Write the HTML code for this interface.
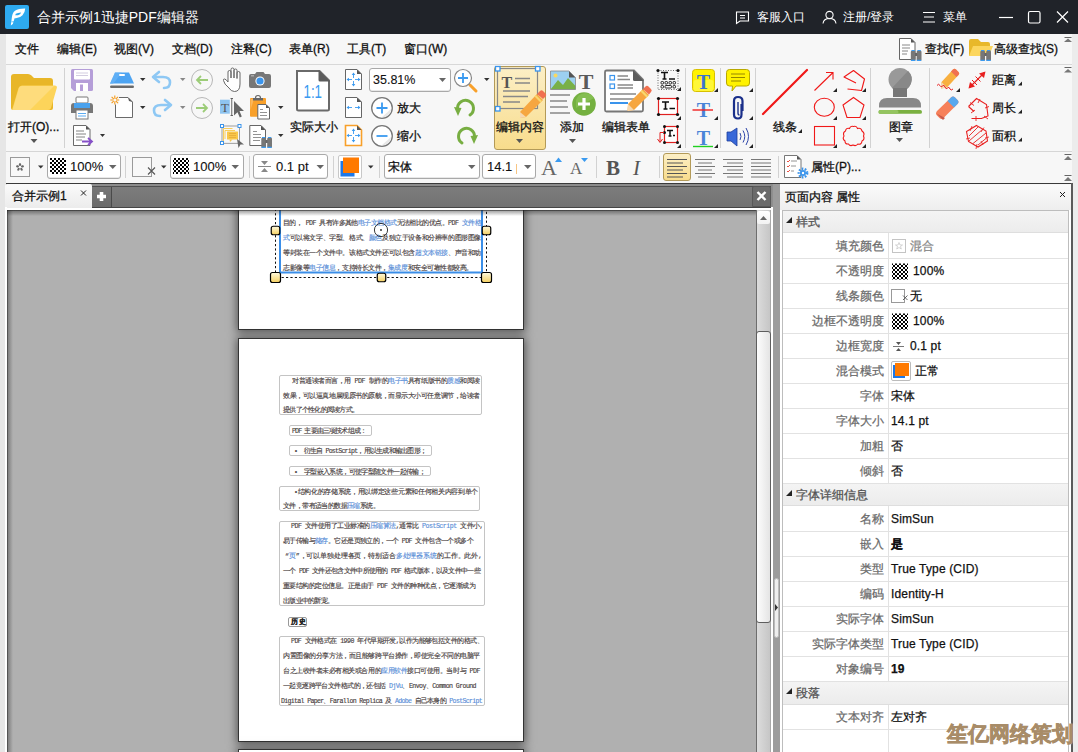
<!DOCTYPE html>
<html><head><meta charset="utf-8">
<style>
*{margin:0;padding:0;box-sizing:border-box}
html,body{width:1078px;height:752px;overflow:hidden;background:#f7f7f7;font-family:"Liberation Sans",sans-serif;font-size:12px;color:#111}
.a{position:absolute}
.t{position:absolute;white-space:nowrap;line-height:14px;-webkit-text-stroke:0.3px currentColor}
svg{position:absolute;overflow:visible}
#title{left:0;top:0;width:1078px;height:34px;background:#202329;color:#fff}
#menu{left:6px;top:34px;width:1066px;height:31px;background:#f7f7f7;border-bottom:1px solid #d8d8d8}
#leftstrip{left:0;top:34px;width:6px;height:718px;background:#e6e6e6}
#rightstrip{left:1072px;top:34px;width:6px;height:718px;background:#ececec}
#ribbon{left:6px;top:65px;width:1066px;height:87px;background:#f7f7f7;border-bottom:1px solid #d6d6d6}
#fmt{left:6px;top:152px;width:1066px;height:31px;background:#f7f7f7}
#darkline{left:6px;top:183px;width:1066px;height:1px;background:#3a3a3a}
.sep{position:absolute;width:1px;background:#d4d4d4}
.dd{position:absolute;background:#fff;border:1px solid #a9a9a9;border-radius:3px;box-shadow:inset 0 -1px 0 #e8e8e8}
.arr{position:absolute;width:0;height:0;border-left:3.5px solid transparent;border-right:3.5px solid transparent;border-top:4px solid #555}
.arrg{border-top-color:#777}
.corner{position:absolute;width:0;height:0;border-left:5px solid transparent;border-bottom:5px solid #222}
.pl{position:absolute;margin-top:1px;white-space:nowrap;font-family:"Liberation Mono",monospace;font-size:6.6px;line-height:10px;color:#4a4242;-webkit-text-stroke:0.15px currentColor;overflow:visible}
.bl{color:#5b8fd8}
.pb{position:absolute;border:1px solid #c4c4c4;border-radius:2px}
</style></head><body>
<div id="title" class="a">
  <div class="a" style="left:5px;top:5px;width:24px;height:24px;background:#2eaaf0;border-radius:2px"></div>
  <div class="t" style="left:37px;top:9px;font-size:14px;line-height:16px;color:#fff;-webkit-text-stroke:0">合并示例1迅捷PDF编辑器</div>
  <div class="t" style="left:757px;top:10px;font-size:12px;color:#fff;-webkit-text-stroke:0">客服入口</div>
  <div class="t" style="left:843px;top:10px;font-size:12px;color:#fff;-webkit-text-stroke:0">注册/登录</div>
  <div class="t" style="left:943px;top:10px;font-size:12px;color:#fff;-webkit-text-stroke:0">菜单</div>
</div>
<div id="leftstrip" class="a"></div>
<div id="rightstrip" class="a"></div>
<div id="menu" class="a">
  <div class="t" style="left:9px;top:8px">文件</div>
  <div class="t" style="left:51px;top:8px">编辑(E)</div>
  <div class="t" style="left:108px;top:8px">视图(V)</div>
  <div class="t" style="left:166px;top:8px">文档(D)</div>
  <div class="t" style="left:225px;top:8px">注释(C)</div>
  <div class="t" style="left:283px;top:8px">表单(R)</div>
  <div class="t" style="left:341px;top:8px">工具(T)</div>
  <div class="t" style="left:398px;top:8px">窗口(W)</div>
  <div class="t" style="left:919px;top:8px">查找(F)</div>
  <div class="t" style="left:988px;top:8px">高级查找(S)</div>
</div>
<div id="ribbon" class="a"></div>
<div class="t" style="left:8px;top:120px">打开(O)...</div>
<div class="t" style="left:290px;top:120px">实际大小</div>
<div class="dd" style="left:369px;top:68px;width:82px;height:24px"></div>
<div class="t" style="left:373px;top:73px;-webkit-text-stroke:0.1px;font-size:12.5px">35.81%</div>
<div class="t" style="left:397px;top:101px">放大</div>
<div class="t" style="left:397px;top:129px">缩小</div>
<div class="a" style="left:494px;top:66px;width:52px;height:84px;border:1px solid #b39a58;border-radius:3px;background:linear-gradient(#fcefc6,#f8dc8c)"></div>
<div class="t" style="left:496px;top:120px">编辑内容</div>
<div class="t" style="left:560px;top:120px">添加</div>
<div class="t" style="left:602px;top:120px">编辑表单</div>
<div class="t" style="left:773px;top:120px">线条</div>
<div class="t" style="left:889px;top:120px">图章</div>
<div class="t" style="left:992px;top:73px">距离</div>
<div class="t" style="left:992px;top:101px">周长</div>
<div class="t" style="left:992px;top:129px">面积</div>

<div id="fmt" class="a"></div>
<div class="a" style="left:10px;top:157px;width:20px;height:20px;border:1px solid #9a9a9a;background:#f8f8f8"></div>
<div class="dd" style="left:47px;top:154px;width:74px;height:25px"></div>
<div class="t" style="left:70px;top:160px;-webkit-text-stroke:0.1px;font-size:13px">100%</div>
<div class="a" style="left:132px;top:157px;width:20px;height:20px;border:1px solid #9a9a9a;background:#f8f8f8"></div>
<div class="dd" style="left:170px;top:154px;width:74px;height:25px"></div>
<div class="t" style="left:193px;top:160px;-webkit-text-stroke:0.1px;font-size:13px">100%</div>
<div class="dd" style="left:253px;top:154px;width:75px;height:25px"></div>
<div class="t" style="left:276px;top:160px;-webkit-text-stroke:0.1px;font-size:13px">0.1 pt</div>
<div class="a" style="left:338px;top:155px;width:24px;height:24px;border:1px solid #c8c8c8;border-radius:2px;background:#fff"></div>
<div class="dd" style="left:384px;top:154px;width:96px;height:25px"></div>
<div class="t" style="left:388px;top:160px">宋体</div>
<div class="dd" style="left:482px;top:154px;width:54px;height:25px"></div>
<div class="a" style="left:486px;top:156px;width:31px;height:20px;overflow:hidden"><div class="t" style="left:1px;top:4px;-webkit-text-stroke:0.1px;font-size:13px">14.1 p</div></div>
<div class="a" style="left:663px;top:153px;width:28px;height:28px;border:1px solid #b39a58;border-radius:3px;background:linear-gradient(#fcefc6,#f8dc8c)"></div>
<div class="t" style="left:811px;top:160px">属性(P)...</div>

<div id="darkline" class="a"></div>
<!--ICONS1--><svg class="a" style="left:0;top:0" width="1078" height="752" viewBox="0 0 1078 752">
<defs>
<pattern id="chk" width="4" height="4" patternUnits="userSpaceOnUse"><rect width="4" height="4" fill="#fff"/><rect width="2" height="2" fill="#000"/><rect x="2" y="2" width="2" height="2" fill="#000"/></pattern>
<linearGradient id="hdl" x1="0" y1="0" x2="0" y2="1"><stop offset="0" stop-color="#fff6cf"/><stop offset="1" stop-color="#f7d66a"/></linearGradient>
</defs>
<!-- title bar icons -->
<path d="M10.8,25.5 L11.6,19.5 Q12,13 15,10.8 Q18.5,8.3 25.2,8.4 Q25,12.5 22.5,15.3 Q20,18.2 15.8,18.2 L14.6,18.2 L12.8,24 Z" fill="#fff"/>
<path d="M15.8,13.8 Q17.8,12.6 21.2,12.4 Q20.4,14.6 18,15.2 L15.2,15.3 Z" fill="#2aa6ee"/>
<path d="M11.5,21.8 H14" stroke="#2aa6ee" stroke-width="0.7"/>
<path d="M736.5,12 H748.5 V21 H740 L736.5,23.5 Z" fill="none" stroke="#fff" stroke-width="1.1"/>
<path d="M740,15.5 H745 M740,18 H745" stroke="#fff" stroke-width="1"/>
<circle cx="829.5" cy="15" r="3.6" fill="none" stroke="#fff" stroke-width="1.1"/>
<path d="M823,23.5 C823.5,19.5 826,18.5 829.5,18.5 C833,18.5 835.5,19.5 836,23.5" fill="none" stroke="#fff" stroke-width="1.1"/>
<path d="M923,12.5 H935 M924,17 H934 M923,22 H935" stroke="#fff" stroke-width="1.2"/>
<path d="M999,17.5 H1013" stroke="#fff" stroke-width="1.2"/>
<rect x="1028.5" y="11.5" width="11.5" height="11.5" rx="1.5" fill="none" stroke="#fff" stroke-width="1.2"/>
<path d="M1057,11.5 L1068,22.5 M1068,11.5 L1057,22.5" stroke="#fff" stroke-width="1.2"/>
<!-- menu right icons: find -->
<path d="M899.5,38.5 H911 L915,42.5 V59.5 H899.5 Z" fill="#fff" stroke="#666" stroke-width="1"/>
<path d="M911,38.5 V42.5 H915" fill="#555"/>
<path d="M902,45 H910 M902,48 H910 M902,51 H908 M902,54 H907" stroke="#888" stroke-width="1"/>
<path d="M910.8,52 Q910.8,50.5 912.0,50.5 H914.5 Q915.5,50.5 915.5,52 V60.5 H910.8Z" fill="#777"/><path d="M916.7,52 Q916.7,50.5 917.9,50.5 H920.4 Q921.5,50.5 921.5,52 V60.5 H916.7Z" fill="#777"/><rect x="915.0" y="53" width="2.2" height="3" fill="#666"/><path d="M911.0,59.8 h4.3 v1.2 h-4.3 Z M916.9,59.8 h4.3 v1.2 h-4.3Z M911.5,50 h3.3 v1 h-3.3Z M917.5,50 h3.3 v1 h-3.3Z" fill="#3a9af0"/>
<path d="M969,41 Q969,39 971,39 H978 L981,42 H988 Q990,42 990,44 V56 H969 Z" fill="#e8b82a"/>
<path d="M969,56 L973,46 H993 L989,56 Z" fill="#fcd65e"/>
<path d="M980.3,52 Q980.3,50.5 981.5,50.5 H984 Q985,50.5 985,52 V60.5 H980.3Z" fill="#777"/><path d="M986.2,52 Q986.2,50.5 987.4,50.5 H989.9 Q991,50.5 991,52 V60.5 H986.2Z" fill="#777"/><rect x="984.5" y="53" width="2.2" height="3" fill="#666"/><path d="M980.5,59.8 h4.3 v1.2 h-4.3 Z M986.4,59.8 h4.3 v1.2 h-4.3Z M981,50 h3.3 v1 h-3.3Z M987,50 h3.3 v1 h-3.3Z" fill="#3a9af0"/>
<path d="M1064.5,37.5 H1071.5" stroke="#666" stroke-width="1"/>
<path d="M1064,42 L1068,38.5 L1072,42 Z" fill="#777"/>

<!-- ===== RIBBON ===== -->
<!-- open folder -->
<path d="M11,108 V77 Q11,74 14,74 H28 Q30,74 31.5,75.5 L34,78 H50 Q53,78 53,81 V108 Q53,110 51,110 H13 Q11,110 11,108 Z" fill="#e8b628"/>
<path d="M12,110 L18.5,88 Q19.2,85.5 22,85.5 H54.5 Q57.5,85.5 56.8,88 L51,108 Q50.3,110 48,110 Z" fill="#fdd45a"/>
<path d="M12.5,110 L18.5,89.5 Q19.2,86 22,86 H54 L30,110 Z" fill="#fee08a" opacity="0.7"/>
<path d="M30.5,139 H37.5 L34,143 Z" fill="#555"/>
<line x1="64.5" y1="68" x2="64.5" y2="148" stroke="#d2d2d2"/>
<!-- save -->
<path d="M71,70.5 Q71,69 72.5,69 H91.5 Q93,69 93,70.5 V89.5 Q93,91 91.5,91 H74 L71,88 Z" fill="#b59ed8"/>
<rect x="74" y="70" width="16" height="9.5" rx="1" fill="#fff"/>
<path d="M76,73 H88 M76,75.5 H88" stroke="#c8c0d8" stroke-width="0.8"/>
<rect x="76" y="83" width="12" height="8" fill="#fff"/>
<rect x="80" y="84.5" width="3" height="6.5" fill="#b59ed8"/>
<!-- printer -->
<rect x="76" y="97" width="12" height="6" rx="1" fill="#fff" stroke="#777" stroke-width="1"/>
<path d="M71,106 Q71,103 74,103 H90 Q93,103 93,106 V113 H71 Z" fill="#777"/>
<rect x="74" y="103" width="16" height="5" fill="#4aa2ee"/>
<rect x="76" y="110" width="12" height="9" fill="#fff" stroke="#777" stroke-width="1"/>
<path d="M78,113.5 H86 M78,116 H86" stroke="#4aa2ee" stroke-width="0.9"/>
<!-- export doc -->
<path d="M73.5,125.5 H86 L90,129.5 V145.5 H73.5 Z" fill="#fff" stroke="#6a6a6a" stroke-width="1"/>
<path d="M86,125.5 L90,129.5 H86 Z" fill="#555"/>
<path d="M76,131 H84 M76,134 H86 M76,137 H85 M76,140 H82" stroke="#777" stroke-width="0.9"/>
<path d="M82,141.5 H91 M88,138 L92,141.5 L88,145" fill="none" stroke="#8650c8" stroke-width="1.8"/>
<path d="M100,134 H105 L102.5,137 Z" fill="#333"/>
<!-- scanner -->
<path d="M110,83.5 L115,72.5 H129 L134,83.5 Z" fill="#4da4f2"/>
<path d="M110,84 L115,72.5 H122 L113,84 Z" fill="#6db8f8" opacity="0.6"/>
<rect x="119" y="74" width="6" height="2" rx="1" fill="#fff"/>
<rect x="110" y="85.5" width="24" height="2.5" rx="1.2" fill="#6a6a6a"/>
<path d="M140,78 H145.5 L142.75,81 Z" fill="#333"/>
<!-- new doc -->
<path d="M115.5,97.5 H128 L132.5,102 V117.5 H115.5 Z" fill="#fff" stroke="#6a6a6a" stroke-width="1"/>
<path d="M128,97.5 L132.5,102 L129,101 Z" fill="#555"/>
<rect x="110" y="95" width="9" height="9.5" fill="#f7f7f7"/>
<path d="M114.8,95.5 V104.5 M110.3,100 H119.3 M111.6,96.8 L118,103.2 M118,96.8 L111.6,103.2" stroke="#f59a1a" stroke-width="1.1"/>
<circle cx="114.8" cy="100" r="1.5" fill="#f7f7f7"/>
<path d="M140,106 H145.5 L142.75,109 Z" fill="#333"/>
<!-- undo / redo -->
<path d="M155,77 H163 Q170,77 170,82.5 Q170,88 164,88" fill="none" stroke="#8ec8f4" stroke-width="2.6" stroke-linecap="round"/>
<path d="M159,72 L153,77 L159,82" fill="none" stroke="#8ec8f4" stroke-width="2.6" stroke-linecap="round" stroke-linejoin="round"/>
<path d="M180,78 H185.5 L182.75,81 Z" fill="#888"/>
<path d="M169,105 H161 Q154,105 154,110.5 Q154,116 160,116" fill="none" stroke="#8ec8f4" stroke-width="2.6" stroke-linecap="round"/>
<path d="M165,100 L171,105 L165,110" fill="none" stroke="#8ec8f4" stroke-width="2.6" stroke-linecap="round" stroke-linejoin="round"/>
<path d="M180,106 H185.5 L182.75,109 Z" fill="#888"/>
<!-- back/forward circles -->
<circle cx="202" cy="80" r="10.5" fill="none" stroke="#b8b8b8" stroke-width="1"/>
<path d="M208,80 H197 M201,76 L197,80 L201,84" fill="none" stroke="#9ccc78" stroke-width="1.8"/>
<circle cx="202" cy="108" r="10.5" fill="none" stroke="#b8b8b8" stroke-width="1"/>
<path d="M196,108 H207 M203,104 L207,108 L203,112" fill="none" stroke="#9ccc78" stroke-width="1.8"/>
<!-- hand -->
<path d="M229,88 Q224,84 223.5,80.5 Q223,79 224.5,79 Q226,79 228,82 V72 Q228,70.5 229.5,70.5 Q231,70.5 231,72 V78 V69.5 Q231,68 232.5,68 Q234,68 234,69.5 V78 V70.5 Q234,69 235.5,69 Q237,69 237,70.5 V78.5 V73 Q237,71.5 238.5,71.5 Q240,71.5 240,73 V84 Q240,91.5 234.5,91.5 Q231,91.5 229,88 Z" fill="#fff" stroke="#666" stroke-width="1"/>
<!-- camera -->
<path d="M249,76 Q249,74 251,74 H255 L256.5,72 H263.5 L265,74 H269 Q271,74 271,76 V86 Q271,88 269,88 H251 Q249,88 249,86 Z" fill="#777"/>
<circle cx="260" cy="81" r="4.6" fill="#fff"/>
<circle cx="260" cy="81" r="3.6" fill="#3a94ec"/>
<rect x="251" y="75" width="3" height="1.5" fill="#aaa"/>
<!-- text select -->
<rect x="220" y="99.7" width="9.8" height="14" fill="#8ec4f0"/>
<text x="225" y="112" font-family="Liberation Serif" font-size="13" fill="#555" text-anchor="middle">T</text>
<path d="M230.5,98.5 H233 M231.75,98.5 V115.5 M230.5,115.5 H233" stroke="#555" stroke-width="0.9"/>
<path d="M234,101 L244,111 H239.5 L241.8,116.5 L239.8,117.6 L237.5,112.2 L234,115.5 Z" fill="#666"/>
<!-- clipboard -->
<rect x="250" y="98" width="16" height="18.8" rx="1" fill="#f8a02a"/>
<path d="M250.5,99 H254 L250.5,110 Z" fill="#fcc070" opacity="0.7"/>
<path d="M253,98 H263 V100.5 H253 Z" fill="#666"/>
<path d="M255.5,98 Q255.5,95.5 258,95.5 Q260.5,95.5 260.5,98" fill="none" stroke="#666" stroke-width="1.2"/>
<path d="M257.8,104.5 H266 L269.5,108 V119 H257.8 Z" fill="#fff" stroke="#666" stroke-width="1"/>
<path d="M266,104.5 L269.5,108 H266 Z" fill="#555"/>
<path d="M260,109.5 H263 M260,112.5 H267 M260,115.5 H267" stroke="#777" stroke-width="0.8"/>
<path d="M278,106 H283.5 L280.75,109 Z" fill="#333"/>
<!-- comment select -->
<rect x="222" y="126" width="17.5" height="17.3" fill="none" stroke="#888" stroke-width="0.8"/>
<path d="M223.5,141 V128.5 H232.5" fill="none" stroke="#f8c848" stroke-width="0.9"/>
<path d="M225,139 V130.5 H235" fill="none" stroke="#f8c848" stroke-width="0.9"/>
<rect x="227" y="131.5" width="11" height="8" rx="0.5" fill="#f9c84a"/>
<path d="M229,133.5 H236 M229,135.5 H236 M229,137.5 H236" stroke="#e0a030" stroke-width="0.6"/>
<path d="M229.5,139.5 L230,142 L232.5,139.5Z" fill="#f9c84a"/>
<g fill="#fff" stroke="#3a94ec" stroke-width="1"><rect x="220.5" y="124.5" width="3" height="3"/><rect x="238" y="124.5" width="3" height="3"/><rect x="220.5" y="141.5" width="3" height="3"/></g>
<path d="M237,139 L244,144.5 H240.5 L238.5,148 Z" fill="#666"/>
<!-- doc binoculars -->
<path d="M249.8,125.5 H261 L265.5,130 V145.5 H249.8 Z" fill="#fff" stroke="#666" stroke-width="1"/>
<path d="M261,125.5 L265.5,130 H261 Z" fill="#555"/>
<path d="M253,131.5 H257 M253,134.5 H261 M253,137.5 H261 M253,140.5 H260" stroke="#777" stroke-width="0.8"/>
<path d="M261.3,139 Q261.3,137.5 262.5,137.5 H265 Q266,137.5 266,139 V147.5 H261.3Z" fill="#777"/>
<path d="M267.2,139 Q267.2,137.5 268.4,137.5 H270.9 Q272,137.5 272,139 V147.5 H267.2Z" fill="#777"/>
<rect x="265.5" y="140" width="2.2" height="3" fill="#666"/>
<path d="M261.5,146.8 h4.3 v1.2 h-4.3 Z M267.4,146.8 h4.3 v1.2 h-4.3Z M262,137 h3.3 v1 h-3.3Z M268,137 h3.3 v1 h-3.3Z" fill="#3a9af0"/>
<path d="M278,134 H283.5 L280.75,137 Z" fill="#333"/>
<!-- 1:1 -->
<path d="M297,71 H319.5 L329,80.5 V109 Q329,110.5 327.5,110.5 H298.5 Q297,110.5 297,109 Z" fill="#fff" stroke="#6a6a6a" stroke-width="2"/>
<path d="M318.5,70 L330,81.5 H320 Q318.5,81.5 318.5,80 Z" fill="#5c5c5c"/>
<text x="303.5" y="98" font-size="19" font-family="Liberation Sans" fill="#3a9af0" textLength="18.5" lengthAdjust="spacingAndGlyphs">1:1</text>
<!-- small docs -->
<g stroke="#666" stroke-width="1" fill="#fff">
<path d="M345.5,69.5 H357 L361.5,74 V89.5 H345.5 Z"/>
<path d="M345.5,97.5 H357 L361.5,102 V117.5 H345.5 Z"/>
</g>
<path d="M345.5,125.5 H357 L361.5,130 V145.5 H345.5 Z" fill="#fff" stroke="#f8a02a" stroke-width="1.6"/>
<path d="M357,69.5 L361.5,74 H357Z M357,97.5 L361.5,102 H357Z M357,125.5 L361.5,130 H357Z" fill="#555"/>
<g stroke="#3a9af0" fill="#3a9af0"><path d="M353.5,74.5 V78.0 M353.5,81.0 V84.5 M348.5,79.5 H352.0 M355.0,79.5 H358.5 " fill="none" stroke-width="0.9"/><path d="M351.7,75.0 L353.5,72.5 L355.3,75.0Z M351.7,84.0 L353.5,86.5 L355.3,84.0Z M349.0,77.7 L346.5,79.5 L349.0,81.3Z M358.0,77.7 L360.5,79.5 L358.0,81.3Z " stroke="none"/><path d="M348.5,107.5 H352.0 M355.0,107.5 H358.5 " fill="none" stroke-width="0.9"/><path d="M349.0,105.7 L346.5,107.5 L349.0,109.3Z M358.0,105.7 L360.5,107.5 L358.0,109.3Z " stroke="none"/><path d="M353.5,130.5 V134.0 M353.5,137.0 V140.5 M348.5,135.5 H352.0 M355.0,135.5 H358.5 " fill="none" stroke-width="0.9"/><path d="M351.7,131.0 L353.5,128.5 L355.3,131.0Z M351.7,140.0 L353.5,142.5 L355.3,140.0Z M349.0,133.7 L346.5,135.5 L349.0,137.3Z M358.0,133.7 L360.5,135.5 L358.0,137.3Z " stroke="none"/></g>
<!-- zoom dropdown arrow -->
<path d="M439,78 H446 L442.5,82 Z" fill="#666"/>
<!-- magnifier -->
<path d="M470,85 L476,91" stroke="#f8a02a" stroke-width="3" stroke-linecap="round"/>
<circle cx="463" cy="78" r="8.5" fill="#fff" stroke="#888" stroke-width="1.2"/>
<path d="M458,78 H468 M463,73 V83" stroke="#3a9af0" stroke-width="1.8"/>
<path d="M484,78 H489.5 L486.75,81 Z" fill="#333"/>
<!-- zoom in/out circles -->
<circle cx="382" cy="108" r="10.3" fill="#fff" stroke="#777" stroke-width="1.3"/>
<path d="M385,117 A9,9 0 0 0 391,109 L382,117Z" fill="#e8e8e8"/>
<path d="M376.5,108 H387.5 M382,102.5 V113.5" stroke="#3a9af0" stroke-width="1.8"/>
<circle cx="382" cy="136" r="10.3" fill="#fff" stroke="#777" stroke-width="1.3"/>
<path d="M385,145 A9,9 0 0 0 391,137 L382,145Z" fill="#e8e8e8"/>
<path d="M376.5,136 H387.5" stroke="#3a9af0" stroke-width="1.8"/>
<!-- rotate -->
<path d="M457.5,109 A8,8 0 1 1 470,115" fill="none" stroke="#78ae42" stroke-width="3" stroke-linecap="round"/>
<path d="M454,107 L461.5,108 L458,116 Z" fill="#78ae42"/>
<path d="M474.5,137 A8,8 0 1 0 462,143" fill="none" stroke="#78ae42" stroke-width="3" stroke-linecap="round"/>
<path d="M478,135 L470.5,136 L474,144 Z" fill="#78ae42"/>
</svg>
<!--/ICONS1-->
<!--ICONS2--><svg class="a" style="left:0;top:0" width="1078" height="752" viewBox="0 0 1078 752">
<!-- edit content icon -->
<rect x="497.5" y="68.5" width="40" height="40" fill="none" stroke="#888" stroke-width="1.2"/>
<g fill="#fff" stroke="#3a94ec" stroke-width="1.3">
<rect x="495.5" y="66.5" width="4.5" height="4.5"/><rect x="535.5" y="66.5" width="4.5" height="4.5"/><rect x="495.5" y="106.5" width="4.5" height="4.5"/>
</g>
<text x="501.5" y="87.5" font-family="Liberation Serif" font-weight="bold" font-size="16" fill="#555">T</text>
<path d="M515,78.5 H530 M515,83 H530 M503,91 H530 M503,96.5 H528 M503,102 H520" stroke="#888" stroke-width="1.4"/>
<path d="M520,112 L537,94 L543,100 L526,117 L520,118 Z" fill="#f6a640"/>
<path d="M537,94 L540,91 Q541.5,89.5 543,91 L545.5,93.5 Q547,95 545.5,96.5 L543,99 Z" fill="#f07050"/>
<path d="M536,95 L542,101 L540.5,102.5 L534.5,96.5Z" fill="#f8d870"/>
<path d="M520,112 L526,117 L520,118 Z" fill="#f6d8b0"/>
<path d="M516,139 H523 L519.5,143 Z" fill="#555"/>
<!-- add icon -->
<path d="M550.5,71 H569 L575.5,77.5 V89.5 H550.5 Z" fill="#9cd0f0"/>
<path d="M550.5,89.5 L558,80 L563,85 L568,78 L575.5,86 V89.5 Z" fill="#78b048"/>
<circle cx="555.5" cy="75.5" r="2" fill="#f8d860"/>
<path d="M569,71 L575.5,77.5 H569Z" fill="#555"/>
<path d="M550.5,71 H569 L575.5,77.5 V89.5 H550.5 Z" fill="none" stroke="#888" stroke-width="0.8"/>
<text x="586" y="88.5" font-family="Liberation Serif" font-weight="bold" font-size="22" fill="#5a5a5a" text-anchor="middle">T</text>
<path d="M550,95 H570 M550,101 H567 M550,107 H568 M550,113 H570" stroke="#888" stroke-width="1.5"/>
<circle cx="584" cy="104" r="11.8" fill="#74b040"/>
<path d="M576,100 A10,10 0 0 1 594,98 L576,108Z" fill="#8cc458" opacity="0.7"/>
<path d="M578,104 H590 M584,98 V110" stroke="#fff" stroke-width="3.2"/>
<path d="M569,139 H576 L572.5,143 Z" fill="#555"/>
<!-- edit form -->
<path d="M605,72 Q605,70.5 606.5,70.5 H634 L643,79.5 V110 Q643,111.5 641.5,111.5 H606.5 Q605,111.5 605,110 Z" fill="#fff" stroke="#777" stroke-width="1.8"/>
<path d="M633,70 L644,81 H634.5 Q633,81 633,79.5Z" fill="#5c5c5c"/>
<rect x="610" y="75.5" width="4.5" height="4.5" fill="none" stroke="#3a94ec" stroke-width="1.2"/>
<rect x="610" y="84" width="4.5" height="4.5" fill="none" stroke="#3a94ec" stroke-width="1.2"/>
<path d="M617.5,76 H628 M617.5,79.5 H630 M617.5,85 H633 M617.5,88 H633 M610,94 H636 M610,99 H636" stroke="#888" stroke-width="1.3"/>
<path d="M610,103 H628" stroke="#3a94ec" stroke-width="2"/>
<path d="M628,104 L643,89 L649,95 L634,110 L627.5,111 Z" fill="#f6a640"/>
<path d="M643,89 L645.5,86.5 Q647,85 648.5,86.5 L651,89 Q652.5,90.5 651,92 L649,94.5 Z" fill="#f07050"/>
<path d="M642,90 L648,96 L646.5,97.5 L640.5,91.5Z" fill="#f8d870"/>
<path d="M628,104 L634,110 L627.5,111 Z" fill="#f6d8b0"/>
<!-- typewriter col -->
<rect x="658" y="70.5" width="20" height="19" fill="none" stroke="#444" stroke-width="0.8" stroke-dasharray="1,1.5"/>
<g fill="#111"><circle cx="658" cy="70.5" r="1.6"/><circle cx="678" cy="70.5" r="1.6"/></g>
<path d="M661,72.5 H668 M664.5,72.5 V79 M662.5,79 H666.5 M669,79 H675" stroke="#111" stroke-width="1.6"/>
<g fill="none" stroke="#111" stroke-width="0.9">
<rect x="661" y="81.5" width="2.5" height="2.5" rx="0.8"/><rect x="665" y="81.5" width="2.5" height="2.5" rx="0.8"/><rect x="669" y="81.5" width="2.5" height="2.5" rx="0.8"/><rect x="673" y="81.5" width="2.5" height="2.5" rx="0.8"/>
<rect x="661" y="85.5" width="2.5" height="2.5" rx="0.8"/><rect x="665" y="85.5" width="6.5" height="2.5" rx="0.8"/><rect x="673" y="85.5" width="2.5" height="2.5" rx="0.8"/>
</g>
<path d="M677,91 L681,91 L681,87 Z" fill="#222"/>
<rect x="658.5" y="98.5" width="19" height="16" fill="#fff" stroke="#e02020" stroke-width="1.2"/>
<g fill="#111"><circle cx="658.5" cy="98.5" r="1.6"/><circle cx="677.5" cy="98.5" r="1.6"/><circle cx="658.5" cy="114.5" r="1.6"/><circle cx="677.5" cy="114.5" r="1.6"/></g>
<path d="M662,102 H669 M665.5,102 V109 M663.5,109 H667.5 M669.5,108.5 H675" stroke="#111" stroke-width="1.6"/>
<path d="M677,120 L681,120 L681,116 Z" fill="#222"/>
<rect x="664.5" y="126.5" width="13" height="16" fill="#fff" stroke="#e02020" stroke-width="1.2"/>
<g fill="#111"><circle cx="664.5" cy="126.5" r="1.5"/><circle cx="677.5" cy="126.5" r="1.5"/><circle cx="664.5" cy="142.5" r="1.5"/><circle cx="677.5" cy="142.5" r="1.5"/><circle cx="664.5" cy="132.5" r="1.5"/></g>
<path d="M667,130.5 H673 M670,130.5 V136 M668.5,136 H671.5 M673,135.5 H675" stroke="#111" stroke-width="1.5"/>
<path d="M664,132.5 H660 V142 M657.5,139 L660,142.5 L662.5,139" fill="none" stroke="#e02020" stroke-width="1"/>
<path d="M677,148 L681,148 L681,144 Z" fill="#222"/>
<line x1="685.5" y1="68" x2="685.5" y2="148" stroke="#d2d2d2"/>
<!-- T col -->
<rect x="692.5" y="69.5" width="22" height="22" rx="3" fill="#fff200" stroke="#d8c000" stroke-width="1"/>
<rect x="693.5" y="80" width="20" height="11" rx="2" fill="#fffb70" opacity="0.5"/>
<text x="703.5" y="88.5" font-family="Liberation Serif" font-weight="bold" font-size="20" fill="#3a74d0" text-anchor="middle">T</text>
<path d="M714,92 L718,92 L718,88 Z" fill="#222"/>
<text x="703.5" y="117" font-family="Liberation Serif" font-weight="bold" font-size="20" fill="#4a84d8" text-anchor="middle">T</text>
<path d="M692.5,110 H713" stroke="#f02020" stroke-width="1.4"/>
<path d="M714,120 L718,120 L718,116 Z" fill="#222"/>
<text x="703.5" y="145" font-family="Liberation Serif" font-weight="bold" font-size="20" fill="#4a84d8" text-anchor="middle">T</text>
<path d="M693,146.5 H713" stroke="#20d020" stroke-width="1.4"/>
<path d="M714,148 L718,148 L718,144 Z" fill="#222"/>
<line x1="720.5" y1="68" x2="720.5" y2="148" stroke="#d2d2d2"/>
<!-- bubble, clip, speaker -->
<path d="M726.5,72.5 Q726.5,69.5 729.5,69.5 H746.5 Q749.5,69.5 749.5,72.5 V83 Q749.5,86 746.5,86 H736 L732,91 L732.5,86 H729.5 Q726.5,86 726.5,83 Z" fill="#fff200" stroke="#b8a800" stroke-width="1"/>
<path d="M731,74 H745 M731,77.5 H745 M731,81 H741" stroke="#8a7a00" stroke-width="0.9"/>
<path d="M749,92 L753,92 L753,88 Z" fill="#222"/>
<path d="M741.5,104 V114.5 Q741.5,118.5 738,118.5 Q734,118.5 734,114.5 V101 Q734,97 738,97 Q742.5,97 742.5,101 V111" fill="none" stroke="#1a2f8a" stroke-width="2.2"/>
<path d="M738,102 V113 Q738,115 739.5,115" fill="none" stroke="#1a2f8a" stroke-width="1.4"/>
<path d="M749,120 L753,120 L753,116 Z" fill="#222"/>
<path d="M727,132 H731 L737,128 V146 L731,141 H727 Z" fill="#3868d8" stroke="#1c3c9c" stroke-width="0.8"/>
<path d="M740,133 Q742,136.5 740,140 M743,130.5 Q746.5,136.5 743,142.5 M746,128 Q751,136.5 746,145" fill="none" stroke="#2c44a8" stroke-width="1"/>
<path d="M749,148 L753,148 L753,144 Z" fill="#222"/>
<line x1="755.5" y1="68" x2="755.5" y2="148" stroke="#d2d2d2"/>
<!-- line tool -->
<path d="M763,114 L807,70" stroke="#f01818" stroke-width="2.2" stroke-linecap="round"/>
<path d="M798,133 L802,133 L802,129 Z" fill="#222"/>
<path d="M814.5,90.5 L833,72.5 M826,72.5 H833 V79.5" fill="none" stroke="#f01818" stroke-width="1.1"/>
<path d="M833,92 L837,92 L837,88 Z" fill="#222"/>
<ellipse cx="824.3" cy="107.3" rx="10" ry="9" fill="none" stroke="#f01818" stroke-width="1.1"/>
<path d="M833,120 L837,120 L837,116 Z" fill="#222"/>
<rect x="814.5" y="126.5" width="20" height="18.5" fill="none" stroke="#f01818" stroke-width="1.1"/>
<path d="M833,148 L837,148 L837,144 Z" fill="#222"/>
<path d="M856,83 L844,77 L853.5,70.5 L864.5,79 L861.5,90.5 L847.5,89" fill="none" stroke="#f01818" stroke-width="1.1" stroke-linejoin="round"/>
<path d="M862,92 L866,92 L866,88 Z" fill="#222"/>
<path d="M853.5,97.5 L864,105 L860,117.5 H847 L843,105 Z" fill="none" stroke="#f01818" stroke-width="1.1"/>
<path d="M862,120 L866,120 L866,116 Z" fill="#222"/>
<path d="M853.5,126.5 Q856.5,125.5 857.5,128.5 Q861,127.5 862,131 Q865,133 863.5,136 Q865,139.5 862,141 Q861.5,145 858,144 Q856,146.5 853,145 Q850,146.5 848.5,144 Q845,144.5 845,141 Q842,139 844,136 Q842.5,132.5 845.5,131 Q846,127.5 849.5,128.5 Q850.5,125.5 853.5,126.5 Z" fill="none" stroke="#f01818" stroke-width="1.1"/>
<path d="M862,148 L866,148 L866,144 Z" fill="#222"/>
<line x1="870.5" y1="68" x2="870.5" y2="148" stroke="#d2d2d2"/>
<!-- stamp -->
<circle cx="900" cy="79.5" r="11.5" fill="#999"/>
<path d="M892,88 L908,71 A11.5,11.5 0 0 1 900,91 A11.5,11.5 0 0 1 892,88Z" fill="#888"/>
<rect x="893" y="88" width="14" height="9" fill="#777"/>
<path d="M879,106 Q879,98 887,98 H913 Q921,98 921,106 V107.5 H879 Z" fill="#888"/>
<rect x="878.5" y="110" width="43.5" height="3.8" rx="1.9" fill="#7ab040"/>
<rect x="878.5" y="110" width="20" height="3.8" rx="1.9" fill="#94c460"/>
<path d="M896,138 H903 L899.5,142 Z" fill="#555"/>
<line x1="929.5" y1="68" x2="929.5" y2="148" stroke="#d2d2d2"/>
<!-- pencil draw -->
<path d="M941.5,82 L953,69.5 Q954.5,68 956,69.5 L958.5,72 Q960,73.5 958.5,75 L947,87.5 L941,88.5 Z" fill="#f8b040"/>
<path d="M953,69.5 Q954.5,68 956,69.5 L958.5,72 Q960,73.5 958.5,75 L956.5,77 L951,71.5Z" fill="#f07050"/>
<path d="M941.5,82 L947,87.5 L941,88.5 Z" fill="#f6d8b0"/>
<path d="M937,85.5 Q938.5,83 940,85.5 Q941,88 942.5,86 Q944,84 945,87 Q946,90 947.5,88 Q949,86 950,89 Q951,91 953,89" fill="none" stroke="#e82020" stroke-width="1"/>
<path d="M956,92 L960,92 L960,88 Z" fill="#222"/>
<!-- eraser -->
<path d="M937,111 L951,97.5 Q953,95.5 955,97.5 L957.5,100 Q959.5,102 957.5,104 L943.5,118 Q941.5,120 939.5,118 L937,115.5 Q935,113.5 937,111Z" fill="#f6805a"/>
<path d="M947.5,101 L951,97.5 Q953,95.5 955,97.5 L957.5,100 Q959.5,102 957.5,104 L954,107.5 Z" fill="#58a8ee"/>
<path d="M936.5,113.5 L943,120 L945,118 Z" fill="#c8584a"/>
<!-- distance -->
<path d="M969.5,87.5 L984.5,72.5" stroke="#e82020" stroke-width="1.2"/>
<path d="M968.5,88.5 L970,82 L975,86.5Z M985.5,71.5 L984,78 L979,73.5Z" fill="#e82020"/>
<path d="M972,80 L977,85 M975.5,76.5 L980.5,81.5" stroke="#e82020" stroke-width="1"/>
<!-- perimeter -->
<path d="M968.5,106.5 L976.5,98.5 L986.5,104.5 L988,116 L981.5,118.5 L971.5,118.5 M968.5,106.5 L974,111.5" fill="none" stroke="#e82020" stroke-width="1.1"/>
<path d="M970,102.5 L974,105.5 M980,99 L978,103 M985,108 L989,106.5 M984,116 L988,119 M976,116 L976,121 M971,113 L975,110" stroke="#e82020" stroke-width="0.9"/>
<!-- area -->
<path d="M976.5,125.5 L986,131 L987.5,141 L978,147 L968.5,141.5 L966.5,131.5 Z" fill="none" stroke="#e82020" stroke-width="1.1"/>
<path d="M969,136 L978,127 M969,141 L983,129 M973,143.5 L986,133 M978,145 L986.5,138" stroke="#e82020" stroke-width="0.9"/>
<path d="M972,126 L970,131 M984,127.5 L981,132 M989,137 L985,138 M983,145 L981,141 M976,149 L977,144 M966,139 L970,138" stroke="#e82020" stroke-width="0.8"/>
<path d="M1018,85.5 L1022,85.5 L1022,81.5 Z M1018,113.5 L1022,113.5 L1022,109.5 Z M1018,141.5 L1022,141.5 L1022,137.5 Z" fill="#222"/>
<path d="M1064.5,67.5 H1071.5" stroke="#666" stroke-width="1"/>
<path d="M1064,72.5 L1068,69 L1072,72.5 Z" fill="#777"/>
</svg>
<!--/ICONS2-->
<!--ICONS3--><svg class="a" style="left:0;top:0" width="1078" height="752" viewBox="0 0 1078 752">
<defs>
<pattern id="chk2" width="4" height="4" patternUnits="userSpaceOnUse" x="0" y="0"><rect width="4" height="4" fill="#fff"/><rect width="2" height="2" fill="#000"/><rect x="2" y="2" width="2" height="2" fill="#000"/></pattern>
</defs>
<!-- format bar -->
<ellipse cx="20.00" cy="164.60" rx="1.5" ry="1.1" transform="rotate(90 20.00 164.60)" fill="#666"/><ellipse cx="22.47" cy="166.40" rx="1.5" ry="1.1" transform="rotate(162 22.47 166.40)" fill="#666"/><ellipse cx="21.53" cy="169.30" rx="1.5" ry="1.1" transform="rotate(234 21.53 169.30)" fill="#666"/><ellipse cx="18.47" cy="169.30" rx="1.5" ry="1.1" transform="rotate(306 18.47 169.30)" fill="#666"/><ellipse cx="17.53" cy="166.40" rx="1.5" ry="1.1" transform="rotate(378 17.53 166.40)" fill="#666"/>
<path d="M38,165.5 H43.5 L40.75,168.5 Z" fill="#333"/>
<rect x="50" y="158" width="16" height="16" fill="url(#chk2)"/>
<path d="M109,165 H116.5 L112.75,169 Z" fill="#666"/>
<line x1="125.5" y1="156" x2="125.5" y2="178" stroke="#d2d2d2"/>
<path d="M148,167.5 L155,174.5 M155,167.5 L148,174.5" stroke="#555" stroke-width="1.1"/>
<path d="M161,165.5 H166.5 L163.75,168.5 Z" fill="#333"/>
<rect x="173" y="158" width="16" height="16" fill="url(#chk2)"/>
<path d="M231.5,165 H239 L235.25,169 Z" fill="#666"/>
<line x1="249.5" y1="156" x2="249.5" y2="178" stroke="#d2d2d2"/>
<path d="M258,166.5 H271" stroke="#888" stroke-width="1"/>
<path d="M261,161 H268 L264.5,165Z M261,172 H268 L264.5,168Z" fill="#888"/>
<path d="M316.5,165 H324 L320.25,169 Z" fill="#666"/>
<line x1="333.5" y1="156" x2="333.5" y2="178" stroke="#d2d2d2"/>
<rect x="340.5" y="161" width="14" height="15.5" fill="#1e78e8"/>
<rect x="343" y="157.5" width="16" height="15.5" fill="#ff7a00"/>
<path d="M368,165.5 H373.5 L370.75,168.5 Z" fill="#333"/>
<line x1="379.5" y1="156" x2="379.5" y2="178" stroke="#d2d2d2"/>
<path d="M468,165 H475.5 L471.75,169 Z" fill="#666"/>
<path d="M524,165 H531.5 L527.75,169 Z" fill="#666"/>

<text x="541" y="175" font-family="Liberation Serif" font-size="22" fill="#666">A</text>
<path d="M555,162 L558.5,157.5 L562,162 Z" fill="#3a9af0"/>
<text x="570" y="174" font-family="Liberation Serif" font-size="17" fill="#666">A</text>
<path d="M581,158 H588 L584.5,162 Z" fill="#3a9af0"/>
<line x1="596.5" y1="156" x2="596.5" y2="178" stroke="#d2d2d2"/>
<text x="606" y="174.5" font-family="Liberation Serif" font-size="21" font-weight="bold" fill="#555">B</text>
<text x="633" y="174.5" font-family="Liberation Serif" font-size="21" font-style="italic" fill="#555">I</text>
<line x1="659.5" y1="156" x2="659.5" y2="178" stroke="#d2d2d2"/>
<path d="M667,159.5 H687 M667,163 H683 M667,166.5 H687 M667,170 H683 M667,173.5 H687 M667,177 H683" stroke="#555" stroke-width="1"/>
<path d="M695,159.5 H715 M698,163 H712 M695,166.5 H715 M698,170 H712 M695,173.5 H715 M698,177 H712" stroke="#777" stroke-width="1"/>
<path d="M723,159.5 H743 M727,163 H743 M723,166.5 H743 M727,170 H743 M723,173.5 H743 M727,177 H743" stroke="#777" stroke-width="1"/>
<path d="M751,159.5 H771 M751,163 H771 M751,166.5 H771 M751,170 H771 M751,173.5 H771 M751,177 H771" stroke="#777" stroke-width="1"/>
<line x1="778.5" y1="156" x2="778.5" y2="178" stroke="#d2d2d2"/>
<path d="M784.5,155.5 H797 L801,159.5 V177.5 H784.5 Z" fill="#fff" stroke="#777" stroke-width="1"/>
<path d="M797,155.5 L801,159.5 H797Z" fill="#555"/>
<path d="M787,161 l1,1 2,-2 M787,166 l1,1 2,-2 M787,171 l1,1 2,-2" fill="none" stroke="#e84030" stroke-width="0.9"/>
<path d="M791,161 H797 M791,166 H796 M791,171 H794" stroke="#888" stroke-width="0.9"/>
<circle cx="803" cy="173" r="4.2" fill="none" stroke="#3a94ec" stroke-width="2.4" stroke-dasharray="1.6,1.4"/>
<circle cx="803" cy="173" r="3" fill="#3a94ec"/>
<circle cx="803" cy="173" r="1.2" fill="#fff"/>
<path d="M1064.5,154.5 H1071.5" stroke="#666" stroke-width="1"/>
<path d="M1064,160 L1068,156 L1072,160 Z" fill="#777"/>
<path d="M1064.5,175.5 H1071.5" stroke="#666" stroke-width="1"/>
<path d="M1064,181 L1068,177 L1072,181 Z" fill="#777"/>
</svg>
<!--/ICONS3-->
<!--PART4-->
<style>
#tabbar{left:6px;top:184px;width:765px;height:24px;background:linear-gradient(#8c8c8c,#8c8c8c 2px,#505050 2px,#505050 3px,#7c7c7c 3px,#727272 23px,#454545 23px)}
#tab1{left:5px;top:184px;width:87px;height:24px;background:linear-gradient(#fafafa,#ececec);border-radius:2px 2px 0 0}
#plus{left:92px;top:187px;width:20px;height:20px;background:linear-gradient(#767676,#6a6a6a);border-right:1px solid #4a4a4a}
#tabclose{left:752px;top:186px;width:19px;height:21px;background:#6b6b6b;border:1px solid #585858;border-radius:2px 2px 0 0}
#whiteline{left:5px;top:208px;width:768px;height:2px;background:#fff}
#doc{left:7px;top:210px;width:750px;height:542px;background:#b0b0b0;overflow:hidden}
#doctop{left:7px;top:210px;width:750px;height:6px;background:linear-gradient(rgba(30,30,30,.9),rgba(30,30,30,.35) 1.5px,rgba(0,0,0,0))}
#docleft{left:7px;top:210px;width:6px;height:542px;background:linear-gradient(90deg,rgba(30,30,30,.8),rgba(30,30,30,.3) 1.5px,rgba(0,0,0,0))}
#doc .page{position:absolute;background:#fff;box-shadow:0 0 0 1px rgba(40,40,40,.85),0 1px 9px 2px rgba(0,0,0,.55)}
#vscroll{left:756px;top:210px;width:15px;height:542px;background:linear-gradient(90deg,#6e6e6e,#6e6e6e 1px,#dcdcdc 1px,#c6c6c6 14px,#a8a8a8 14px)}
#splitter{left:771px;top:207px;width:11px;height:545px;background:#fff}
#splittop{left:771px;top:184px;width:9px;height:23px;background:linear-gradient(90deg,#8a8a8a,#a8a8a8)}
#split2{left:773px;top:184px;width:7px;height:568px;background:#9c9c9c}
#panel{left:780px;top:185px;width:293px;height:567px;background:linear-gradient(#fafafa,#eeeeee 25px,#fff 25px);border-right:2px solid #5a5a5a}
#ptable{left:782px;top:210px;width:287px;height:542px;background:#fff;border:1px solid #bdbdbd;border-bottom:none}
.sec{position:absolute;left:0;width:285px;background:linear-gradient(#f4f4f4,#ececec);border-bottom:1px solid #dedede}
.row{position:absolute;left:0;width:285px;border-bottom:1px solid #e2e2e2}
.lab{position:absolute;right:184px;bottom:0;white-space:nowrap;color:#6a6a6a;font-size:12px;line-height:24px;-webkit-text-stroke:0.25px currentColor}
.val{position:absolute;left:108px;bottom:0;letter-spacing:0.15px;white-space:nowrap;color:#111;font-size:12px;line-height:24px;-webkit-text-stroke:0.25px currentColor}
.vline{position:absolute;left:105px;top:0;width:1px;height:100%;background:#e2e2e2}
</style>
<div id="tabbar" class="a"></div>
<div id="tab1" class="a"></div>
<div class="t" style="left:12px;top:189px">合并示例1</div>
<svg class="a" style="left:0;top:0" width="120" height="210"><path d="M81,190.5 L86,195.5 M86,190.5 L81,195.5" stroke="#222" stroke-width="1"/></svg>
<div id="plus" class="a"></div>
<svg class="a" style="left:0;top:0" width="120" height="210"><path d="M97,196.5 H106 M101.5,192 V201" stroke="#fff" stroke-width="3.6"/></svg>
<div id="tabclose" class="a"></div>
<svg class="a" style="left:0;top:0" width="780" height="210"><path d="M757.5,192 L765.5,200 M765.5,192 L757.5,200" stroke="#fff" stroke-width="2.4"/></svg>
<div id="whiteline" class="a"></div>
<div id="doc" class="a">
  <div class="page" style="left:232px;top:-10px;width:284px;height:129px"><div class="pl" style="left:44px;top:18px;width:198px;letter-spacing:-0.561px;">目的， PDF 具有许多其他<span class="bl">电子文档格式</span>无法相比的优点。PDF <span class="bl">文件格</span></div>
<div class="pl" style="left:44px;top:33px;width:198px;letter-spacing:-0.400px;"><span class="bl">式</span>可以将文字、字型、格式、<span class="bl">颜色</span>及独立于设备和分辨率的图形图像</div>
<div class="pl" style="left:44px;top:48px;width:198px;letter-spacing:-0.400px;">等封装在一个文件中。该格式文件还可以包含<span class="bl">超文本链接</span>、声音和动</div>
<div class="pl" style="left:44px;top:63px;width:190px;letter-spacing:-0.448px;">志影像等<span class="bl">电子信息</span>，支持特长文件，<span class="bl">集成度</span>和安全可靠性都较高。</div><!--SEL--></div>
  <div class="page" style="left:232px;top:129px;width:284px;height:402px"><div class="pb" style="left:40px;top:36px;width:203px;height:40px"></div>
<div class="pl" style="left:53px;top:37px;width:188px;letter-spacing:-0.445px;">对普通读者而言，用 PDF 制作的<span class="bl">电子书</span>具有纸版书的<span class="bl">质感</span>和阅读</div>
<div class="pl" style="left:44px;top:51.5px;width:197px;letter-spacing:-0.433px;">效果，可以逼真地展现原书的原貌，而显示大小可任意调节，给读者</div>
<div class="pl" style="left:44px;top:66px;width:80px;letter-spacing:-0.750px;">提供了个性化的阅读方式。</div>
<div class="pb" style="left:50px;top:86px;width:83px;height:11px"></div>
<div class="pl" style="left:53px;top:87px;width:80px;letter-spacing:-0.845px;">PDF 主要由三项技术组成：</div>
<div class="pb" style="left:50px;top:106px;width:143px;height:11px"></div>
<div class="pl" style="left:55px;top:107px;width:136px;letter-spacing:-0.765px;">•&nbsp; 衍生自 PostScript，用以生成和输出图形；</div>
<div class="pb" style="left:50px;top:127px;width:142px;height:10px"></div>
<div class="pl" style="left:55px;top:128px;width:136px;letter-spacing:-0.631px;">•&nbsp; 字型嵌入系统，可使字型随文件一起传输；</div>
<div class="pb" style="left:40px;top:147px;width:201px;height:25px"></div>
<div class="pl" style="left:55px;top:148px;width:184px;letter-spacing:-0.320px;">•结构化的存储系统，用以绑定这些元素和任何相关内容到单个</div>
<div class="pl" style="left:44px;top:162px;width:110px;letter-spacing:-0.600px;">文件，带有适当的数据<span class="bl">压缩</span>系统。</div>
<div class="pb" style="left:40px;top:182px;width:206px;height:85px"></div>
<div class="pl" style="left:52px;top:182px;width:192px;letter-spacing:-0.507px;">PDF 文件使用了工业标准的<span class="bl">压缩算法</span>,通常比 <span class="bl">PostScript</span> 文件小,</div>
<div class="pl" style="left:44px;top:197px;width:190px;letter-spacing:-0.587px;">易于传输与<span class="bl">储存</span>。它还是页独立的，一个 PDF 文件包含一个或多个</div>
<div class="pl" style="left:46px;top:212px;width:197px;letter-spacing:-0.130px;">“<span class="bl">页</span>”，可以单独处理各页，特别适合<span class="bl">多处理器系统</span>的工作。此外,</div>
<div class="pl" style="left:44px;top:227px;width:197px;letter-spacing:-0.683px;">一个 PDF 文件还包含文件中所使用的 PDF 格式版本，以及文件中一些</div>
<div class="pl" style="left:44px;top:242px;width:192px;letter-spacing:-0.525px;">重要结构的定位信息。正是由于 PDF 文件的种种优点，它逐渐成为</div>
<div class="pl" style="left:44px;top:257px;width:60px;letter-spacing:-0.750px;">出版业中的新宠。</div>
<div class="pb" style="left:49px;top:278px;width:19px;height:10px;border-color:#999"></div>
<div class="pl" style="left:52px;top:278px;width:16px;letter-spacing:0.500px;"><b style="color:#222">历史</b></div>
<div class="pb" style="left:40px;top:297px;width:206px;height:70px"></div>
<div class="pl" style="left:52px;top:297px;width:192px;letter-spacing:-0.558px;">PDF 文件格式在 1990 年代早期开发,以作为能够包括文件的格式、</div>
<div class="pl" style="left:44px;top:312px;width:197px;letter-spacing:-0.433px;">内置图像的分享方法，而且能够跨平台操作，即使完全不同的电脑平</div>
<div class="pl" style="left:44px;top:327px;width:197px;letter-spacing:-0.463px;">台之上收件者未必有相关或合用的<span class="bl">应用软件</span>接口可使用。当时与 PDF</div>
<div class="pl" style="left:44px;top:342px;width:193px;letter-spacing:-0.586px;">一起竞逐跨平台文件格式的，还包括 <span class="bl">DjVu</span>、Envoy、Common Ground</div>
<div class="pl" style="left:42px;top:357px;width:201px;letter-spacing:-0.690px;">Digital Paper、Farallon Replica 及 <span class="bl">Adobe</span> 自己本身的 <span class="bl">PostScript</span></div></div>
  <div class="page" style="left:232px;top:540px;width:284px;height:30px"></div>
<svg class="a" style="left:-7px;top:-210px" width="1078" height="752">
<defs><linearGradient id="hg" x1="0" y1="0" x2="0" y2="1"><stop offset="0" stop-color="#fffbe0"/><stop offset="1" stop-color="#f5d060"/></linearGradient></defs>
<path d="M280,200 V272.5 H482 V200" fill="none" stroke="#3a8ee8" stroke-width="2"/>
<path d="M275.5,200 V277.5 H486.5 V200" fill="none" stroke="#111" stroke-width="1" stroke-dasharray="2.2,2.2"/>
<circle cx="381" cy="230" r="6.6" fill="none" stroke="#222" stroke-width="0.9"/>
<circle cx="381" cy="230" r="0.9" fill="#222"/>
<rect x="271.25" y="226.25" width="8.5" height="8.5" rx="2" fill="url(#hg)" stroke="#000" stroke-width="1.2"/><rect x="482.25" y="226.25" width="8.5" height="8.5" rx="2" fill="url(#hg)" stroke="#000" stroke-width="1.2"/><rect x="270.5" y="272.5" width="10" height="10" rx="2" fill="url(#hg)" stroke="#000" stroke-width="1.2"/><rect x="377.25" y="273.25" width="8.5" height="8.5" rx="2" fill="url(#hg)" stroke="#000" stroke-width="1.2"/><rect x="481.5" y="272.5" width="10" height="10" rx="2" fill="url(#hg)" stroke="#000" stroke-width="1.2"/></svg>
</div>
<div id="doctop" class="a"></div><div id="docleft" class="a"></div>
<div class="a" style="left:5px;top:207px;width:2px;height:545px;background:#fff"></div>
<div id="vscroll" class="a"></div>
<div class="a" style="left:757px;top:211px;width:13px;height:13px;background:linear-gradient(#fff,#f2f2f2);border-radius:2px"></div>
<svg class="a" style="left:0;top:0" width="780" height="230"><path d="M760,220 L763.5,216 L767,220 Z" fill="#666"/></svg>
<div class="a" style="left:756px;top:331px;width:15px;height:292px;background:linear-gradient(90deg,#fdfdfd,#e4e4e4);border:1px solid #5e5e5e;border-radius:3px"></div>
<div id="splitter" class="a"></div><div id="splittop" class="a"></div>
<div id="split2" class="a"></div>
<div class="a" style="left:774px;top:578px;width:5px;height:60px;background:#eeeeee;border:1px solid #bbb;border-radius:3px"></div>
<svg class="a" style="left:0;top:0" width="790" height="752"><path d="M775,604 L778,607.5 L775,611 Z" fill="#333"/></svg>
<div id="panel" class="a"></div>
<div class="t" style="left:785px;top:190px">页面内容 属性</div>
<svg class="a" style="left:0;top:0" width="1078" height="210"><path d="M1060,192 L1065,197 M1065,192 L1060,197" stroke="#222" stroke-width="1"/></svg>
<div id="ptable" class="a">
<div class="sec" style="top:0px;height:22px"><svg class="a" style="left:0;top:0" width="20" height="22"><path d="M3,12 L9,6 V12 Z" fill="#222"/></svg><div class="t" style="left:13px;top:4px;color:#555;font-size:12px">样式</div></div>
<div class="row" style="top:22px;height:26px"><div class="vline"></div><div class="lab">填充颜色</div><div class="a" style="left:109px;top:6px;width:14px;height:14px;border:1px solid #c4c4c4;background:#fff"></div><svg class="a" style="left:0;top:0" width="130" height="25"><path d="M116,9.5 L117,12 L119.5,12 L117.5,13.5 L118.3,16 L116,14.5 L113.7,16 L114.5,13.5 L112.5,12 L115,12 Z" fill="none" stroke="#bbb" stroke-width="0.6"/></svg><div class="val" style="left:127px"><span style="color:#888">混合</span></div></div>
<div class="row" style="top:48px;height:25px"><div class="vline"></div><div class="lab">不透明度</div><svg class="a" style="left:0;top:0" width="130" height="25"><rect x="109" y="4.5" width="16" height="16" fill="url(#chk2)"/></svg><div class="val" style="left:130px">100%</div></div>
<div class="row" style="top:73px;height:25px"><div class="vline"></div><div class="lab">线条颜色</div><div class="a" style="left:108px;top:5px;width:14px;height:14px;border:1px solid #999;background:#fff"></div><svg class="a" style="left:0;top:0" width="130" height="25"><path d="M120,11.5 L124.5,16 M124.5,11.5 L120,16" stroke="#555" stroke-width="0.9"/></svg><div class="val" style="left:127px">无</div></div>
<div class="row" style="top:98px;height:25px"><div class="vline"></div><div class="lab">边框不透明度</div><svg class="a" style="left:0;top:0" width="130" height="25"><rect x="109" y="4.5" width="16" height="16" fill="url(#chk2)"/></svg><div class="val" style="left:130px">100%</div></div>
<div class="row" style="top:123px;height:25px"><div class="vline"></div><div class="lab">边框宽度</div><svg class="a" style="left:0;top:0" width="130" height="25"><path d="M110,12.5 H121" stroke="#777" stroke-width="1"/><path d="M113,8 H118 L115.5,11Z M113,17 H118 L115.5,14Z" fill="#555"/></svg><div class="val" style="left:127px">0.1 pt</div></div>
<div class="row" style="top:148px;height:25px"><div class="vline"></div><div class="lab">混合模式</div><div class="a" style="left:108px;top:2px;width:20px;height:20px;border:1px solid #bbb;border-radius:2px;background:#fff"></div><svg class="a" style="left:0;top:0" width="130" height="25"><rect x="110" y="6" width="12" height="13" fill="#1e78e8"/><rect x="112" y="4" width="14" height="13" fill="#ff7a00"/></svg><div class="val" style="left:132px">正常</div></div>
<div class="row" style="top:173px;height:25px"><div class="vline"></div><div class="lab">字体</div><div class="val" style="left:108px">宋体</div></div>
<div class="row" style="top:198px;height:25px"><div class="vline"></div><div class="lab">字体大小</div><div class="val" style="left:108px">14.1 pt</div></div>
<div class="row" style="top:223px;height:25px"><div class="vline"></div><div class="lab">加粗</div><div class="val" style="left:108px">否</div></div>
<div class="row" style="top:248px;height:25px"><div class="vline"></div><div class="lab">倾斜</div><div class="val" style="left:108px">否</div></div>
<div class="sec" style="top:273px;height:22px"><svg class="a" style="left:0;top:0" width="20" height="22"><path d="M3,12 L9,6 V12 Z" fill="#222"/></svg><div class="t" style="left:13px;top:4px;color:#555;font-size:12px">字体详细信息</div></div>
<div class="row" style="top:295px;height:26px"><div class="vline"></div><div class="lab">名称</div><div class="val" style="left:108px">SimSun</div></div>
<div class="row" style="top:321px;height:25px"><div class="vline"></div><div class="lab">嵌入</div><div class="val" style="left:108px"><b>是</b></div></div>
<div class="row" style="top:346px;height:25px"><div class="vline"></div><div class="lab">类型</div><div class="val" style="left:108px">True Type (CID)</div></div>
<div class="row" style="top:371px;height:25px"><div class="vline"></div><div class="lab">编码</div><div class="val" style="left:108px">Identity-H</div></div>
<div class="row" style="top:396px;height:25px"><div class="vline"></div><div class="lab">实际字体</div><div class="val" style="left:108px">SimSun</div></div>
<div class="row" style="top:421px;height:25px"><div class="vline"></div><div class="lab">实际字体类型</div><div class="val" style="left:108px">True Type (CID)</div></div>
<div class="row" style="top:446px;height:25px"><div class="vline"></div><div class="lab">对象编号</div><div class="val" style="left:108px"><b>19</b></div></div>
<div class="sec" style="top:471px;height:23px"><svg class="a" style="left:0;top:0" width="20" height="22"><path d="M3,12 L9,6 V12 Z" fill="#222"/></svg><div class="t" style="left:13px;top:4px;color:#555;font-size:12px">段落</div></div>
<div class="row" style="top:494px;height:25px"><div class="vline"></div><div class="lab">文本对齐</div><div class="val" style="left:108px">左对齐</div></div>
<div class="row" style="top:519px;height:25px"><div class="vline"></div></div>
</div>
<div class="a" style="left:1071px;top:183px;width:2px;height:569px;background:#5a5a5a"></div>
<div class="a" style="left:1073px;top:183px;width:5px;height:569px;background:#ececec"></div>
<div class="t" style="left:947px;top:720px;font-size:21px;line-height:28px;font-weight:bold;color:#a88c68;-webkit-text-stroke:0.7px #a88c68;text-shadow:0 0 2px #fff">笙亿网络策划</div>
<!--/PART4-->

</body></html>
